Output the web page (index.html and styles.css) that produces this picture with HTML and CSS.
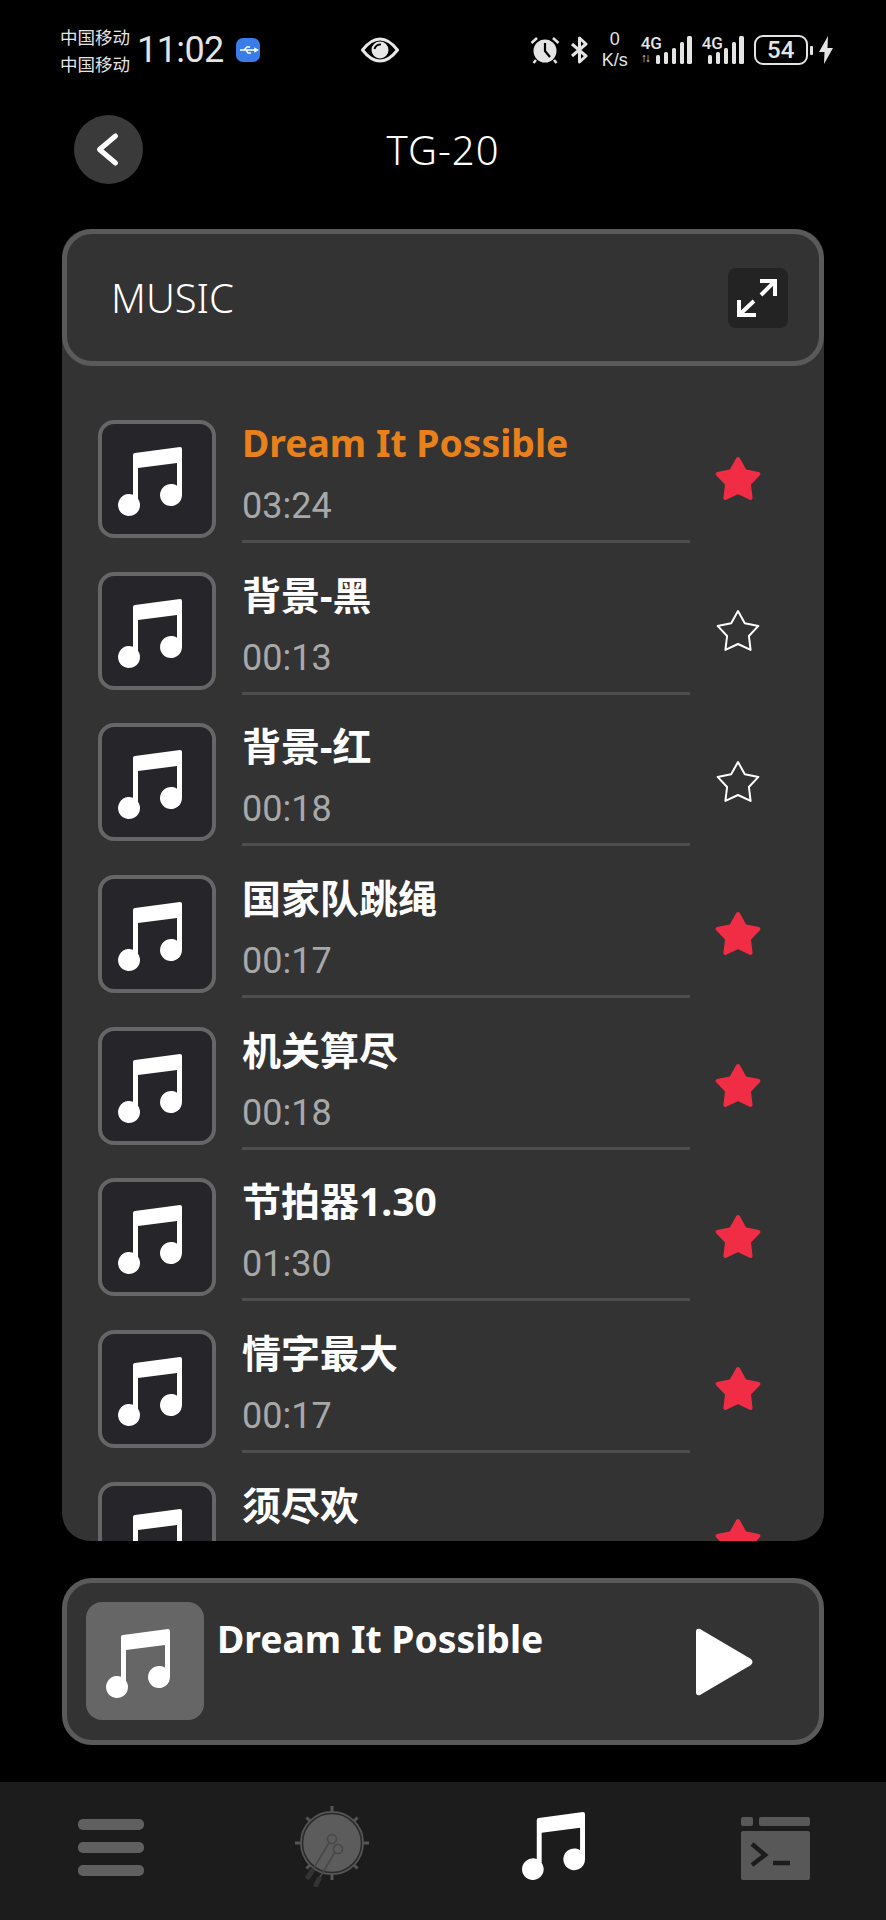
FILE: index.html
```html
<!DOCTYPE html>
<html lang="zh-CN">
<head>
  <meta charset="UTF-8" />
  <meta name="viewport" content="width=device-width, initial-scale=1.0"/>
  <title>TG-20</title>
  <link rel="stylesheet" href="styles.css">
</head>
<body>
  <svg class="defs" width="0" height="0">
    <symbol id="note" viewBox="0 0 118 118">
      <path d="M35 35 Q35 33 37 33 L82 27 Q84 27 84 29 V75 A11 11 0 1 1 79 65.8 V43 L40 48 V78.7 A11 11 0 1 1 35 74.8 Z"/>
    </symbol>
    <symbol id="star" viewBox="0 0 48 48">
      <path d="M24 4 L30.8 16.2 L44.4 18.9 L34.9 29 L36.6 42.9 L24 37 L11.4 42.9 L13.1 29 L3.6 18.9 L17.2 16.2 Z"/>
    </symbol>
  </svg>

  <header class="status">
    <div class="carrier"><span>中国移动</span><span>中国移动</span></div>
    <span class="clock">11:02</span>
    <span class="usb">
      <svg viewBox="0 0 24 24" width="24" height="24" fill="none" stroke="#fff" stroke-width="1.4"><path d="M4 12 H19 M8 12 L11 9 H14 M10 12 L12 15 H15"/><path d="M19 10.5 L21.5 12 L19 13.5 Z" fill="#fff"/></svg>
    </span>
    <svg class="eye" viewBox="0 0 38 26" width="38" height="26">
      <path d="M1.5 13 Q10 2 19 2 Q28 2 36.5 13 Q28 24 19 24 Q10 24 1.5 13 Z" fill="none" stroke="#e8e8e8" stroke-width="3"/>
      <circle cx="19" cy="13" r="8.5" fill="#e8e8e8"/>
      <path d="M13.5 12 A6 6 0 0 1 20 7.5 A6 6 0 0 0 13.5 12 Z" fill="#000" stroke="#000" stroke-width="2"/>
    </svg>
    <div class="status-right">
      <svg class="alarm" viewBox="0 0 30 28" width="30" height="28">
        <circle cx="15" cy="15" r="11.5" fill="#e4e4e4"/>
        <path d="M15 7 V15 L20 21" fill="none" stroke="#000" stroke-width="2.2"/>
        <path d="M1.5 7 L7 2 M28.5 7 L23 2 M6 24 L3.5 27 M24 24 L26.5 27" stroke="#e4e4e4" stroke-width="2.6" fill="none"/>
      </svg>
      <svg class="bt" viewBox="0 0 19 28" width="19" height="28" fill="none" stroke="#e4e4e4" stroke-width="3" stroke-linejoin="round">
        <path d="M2 8 L16 20 L9.5 26 V2 L16 8 L2 20"/>
      </svg>
      <div class="speed"><span class="speed-num">0</span><span class="speed-unit">K/s</span></div>
      <div class="sig sig-first">
        <div class="sig-label"><span>4G</span><span class="sig-arrows">↑↓</span></div>
        <svg viewBox="0 0 36 28" width="36" height="28" fill="#e4e4e4">
          <rect x="0" y="19" width="4" height="9" rx="1.5"/><rect x="8" y="16" width="4" height="12" rx="1.5"/><rect x="16" y="12" width="4" height="16" rx="1.5"/><rect x="24" y="6" width="4" height="22" rx="1.5"/><rect x="31" y="0" width="5" height="28" rx="1.5"/>
        </svg>
      </div>
      <div class="sig">
        <div class="sig-label"><span>4G</span></div>
        <svg viewBox="0 0 36 28" width="36" height="28" fill="#e4e4e4">
          <rect x="0" y="19" width="4" height="9" rx="1.5"/><rect x="8" y="16" width="4" height="12" rx="1.5"/><rect x="16" y="12" width="4" height="16" rx="1.5"/><rect x="24" y="6" width="4" height="22" rx="1.5"/><rect x="31" y="0" width="5" height="28" rx="1.5"/>
        </svg>
      </div>
      <div class="battery"><span>54</span></div>
      <span class="battery-tip"></span>
      <svg class="bolt" viewBox="0 0 14 28" width="14" height="28"><path d="M9 0 L0 16 H5.5 L5 28 L14 12 H8.5 Z" fill="#e4e4e4"/></svg>
    </div>
  </header>

  <div class="topbar">
    <button class="back">
      <svg viewBox="0 0 69 69" width="69" height="69" fill="none" stroke="#fff" stroke-width="5" stroke-linecap="round" stroke-linejoin="round"><path d="M41.5 21 L25.5 34.5 L41.5 48"/></svg>
    </button>
    <h1>TG-20</h1>
  </div>

  <main class="content">
    <section class="music-card">
      <div class="music-head">
        <h2>MUSIC</h2>
        <button class="expand">
          <svg viewBox="0 0 60 60" width="60" height="60" fill="none" stroke="#fff" stroke-width="4"><path d="M32 13 H47 V28 M47 13 L33 27 M11 32 V47 H28 M11 47 L26 33"/></svg>
        </button>
      </div>
      <ul class="song-list">
        <li class="song">
          <div class="song-thumb"><svg class="note"><use href="#note"/></svg></div>
          <div class="song-body"><div class="song-name playing">Dream It Possible</div><div class="song-time">03:24</div></div>
          <svg class="star on"><use href="#star"/></svg>
        </li>
        <li class="song">
          <div class="song-thumb"><svg class="note"><use href="#note"/></svg></div>
          <div class="song-body"><div class="song-name">背景-黑</div><div class="song-time">00:13</div></div>
          <svg class="star"><use href="#star"/></svg>
        </li>
        <li class="song">
          <div class="song-thumb"><svg class="note"><use href="#note"/></svg></div>
          <div class="song-body"><div class="song-name">背景-红</div><div class="song-time">00:18</div></div>
          <svg class="star"><use href="#star"/></svg>
        </li>
        <li class="song">
          <div class="song-thumb"><svg class="note"><use href="#note"/></svg></div>
          <div class="song-body"><div class="song-name">国家队跳绳</div><div class="song-time">00:17</div></div>
          <svg class="star on"><use href="#star"/></svg>
        </li>
        <li class="song">
          <div class="song-thumb"><svg class="note"><use href="#note"/></svg></div>
          <div class="song-body"><div class="song-name">机关算尽</div><div class="song-time">00:18</div></div>
          <svg class="star on"><use href="#star"/></svg>
        </li>
        <li class="song">
          <div class="song-thumb"><svg class="note"><use href="#note"/></svg></div>
          <div class="song-body"><div class="song-name">节拍器1.30</div><div class="song-time">01:30</div></div>
          <svg class="star on"><use href="#star"/></svg>
        </li>
        <li class="song">
          <div class="song-thumb"><svg class="note"><use href="#note"/></svg></div>
          <div class="song-body"><div class="song-name">情字最大</div><div class="song-time">00:17</div></div>
          <svg class="star on"><use href="#star"/></svg>
        </li>
        <li class="song">
          <div class="song-thumb"><svg class="note"><use href="#note"/></svg></div>
          <div class="song-body"><div class="song-name">须尽欢</div></div>
          <svg class="star on"><use href="#star"/></svg>
        </li>
      </ul>
    </section>

    <section class="player">
      <div class="player-thumb"><svg class="note"><use href="#note"/></svg></div>
      <div class="player-name">Dream It Possible</div>
      <svg class="play" viewBox="0 0 60 70" width="60" height="70"><path d="M5 2 L56 32 Q59 35 56 38 L5 68 Q1 69 1 65 V5 Q1 1 5 2 Z" fill="#fff"/></svg>
    </section>
  </main>

  <nav class="tabs">
    <div class="tab">
      <div class="menu-icon"><span></span><span></span><span></span></div>
    </div>
    <div class="tab">
      <svg class="drum" viewBox="0 0 80 84" width="80" height="84">
        <g stroke="#555" stroke-width="3">
          <path d="M40 3 V10 M40 70 V77 M3 40 H10 M70 40 H77 M14.5 14.5 L19 19 M65.5 14.5 L61 19 M14.5 65.5 L19 61 M65.5 65.5 L61 61"/>
        </g>
        <circle cx="40" cy="40" r="31" fill="#5c5c5c" stroke="#555" stroke-width="2"/>
        <circle cx="40" cy="40" r="29.5" fill="none" stroke="#2b2b2b" stroke-width="1.5"/>
        <g fill="none" stroke="#484848" stroke-width="1.6">
          <circle cx="40" cy="36" r="4.5"/>
          <circle cx="46" cy="46" r="4.5"/>
          <path d="M37 40 L20 68 M43 49 L27 76"/>
        </g>
        <path d="M20 68 L16 74 M27 76 L24 82" stroke="#333" stroke-width="5" stroke-linecap="round"/>
      </svg>
    </div>
    <div class="tab">
      <svg class="tab-note" viewBox="20 27 64 69"><use href="#note" width="118" height="118"/></svg>
    </div>
    <div class="tab">
      <svg class="term" viewBox="0 0 69 63" width="69" height="63">
        <g fill="#585858">
          <rect x="0" y="0" width="12" height="9" rx="2"/>
          <rect x="18" y="0" width="51" height="9" rx="2"/>
          <rect x="0" y="14" width="69" height="49" rx="2"/>
        </g>
        <path d="M11 27 L24 38 L11 48" fill="none" stroke="#1c1c1c" stroke-width="4.5"/>
        <path d="M32 46 H49" stroke="#1c1c1c" stroke-width="4.5"/>
      </svg>
    </div>
  </nav>
</body>
</html>
```

FILE: styles.css
```css
:root {
  --card: #333333;
  --line: #5a5a5a;
  --status: #e4e4e4;
  --tabbar: #1c1c1c;
  --orange: #e8811c;
  --red: #f02d45;
}

* {
  box-sizing: border-box;
  margin: 0;
  padding: 0;
}

html, body {
  background-color: #000;
}

body {
  width: 886px;
  height: 1920px;
  overflow: hidden;
  display: flex;
  flex-direction: column;
  color: #fff;
  font-family: "Noto Sans", "Noto Sans CJK SC", sans-serif;
}

.defs {
  position: absolute;
}

button {
  border: none;
  display: block;
}

/* status bar */
.status {
  height: 100px;
  flex: none;
  display: flex;
  align-items: center;
  padding-left: 60px;
  color: var(--status);
}

.carrier {
  display: flex;
  flex-direction: column;
  font-size: 17.5px;
  line-height: 27px;
  font-family: "Noto Sans CJK SC", sans-serif;
}

.clock {
  margin-left: 7px;
  font-family: Roboto, sans-serif;
  font-size: 36px;
  letter-spacing: -0.6px;
}

.usb {
  width: 24px;
  height: 24px;
  margin-left: 12px;
  background-color: #3b7de8;
  border-radius: 7px;
}

.usb svg {
  display: block;
}

.eye {
  margin-left: 101px;
}

.status-right {
  display: flex;
  align-items: center;
  margin-left: 131px;
}

.bt {
  margin-left: 10px;
}

.speed {
  display: flex;
  flex-direction: column;
  align-items: center;
  width: 28px;
  margin-left: 12px;
  font-family: "Liberation Sans", sans-serif;
  line-height: 21px;
}

.speed-num {
  font-size: 18px;
}

.speed-unit {
  font-size: 18px;
}

.sig {
  display: flex;
  align-items: flex-end;
  margin-left: 10px;
}

.sig-first {
  margin-left: 12px;
}

.sig-label {
  display: flex;
  flex-direction: column;
  width: 6px;
  height: 28px;
  font-family: Roboto, sans-serif;
  font-size: 17px;
  font-weight: 500;
  line-height: 15px;
  white-space: nowrap;
}

.sig-first .sig-label {
  width: 15px;
}

.sig-arrows {
  font-family: "Liberation Sans", sans-serif;
  font-size: 12px;
  font-weight: 700;
  line-height: 15px;
  letter-spacing: -2px;
}

.battery {
  display: flex;
  align-items: center;
  justify-content: center;
  width: 54px;
  height: 30px;
  margin-left: 10px;
  border: 2px solid var(--status);
  border-radius: 9px;
  font-family: Roboto, sans-serif;
  font-size: 24px;
  font-weight: 500;
}

.battery-tip {
  width: 3px;
  height: 9px;
  margin-left: 2px;
  background-color: var(--status);
  border-radius: 1px;
}

.bolt {
  margin-left: 6px;
}

/* title row */
.topbar {
  flex: none;
  display: grid;
  grid-template-columns: 1fr auto 1fr;
  align-items: center;
  margin-top: 15px;
  padding: 0 74px;
}

.back {
  width: 69px;
  height: 69px;
  background-color: #3a3a3a;
  border-radius: 50%;
}

.topbar h1 {
  grid-column: 2;
  font-size: 40px;
  font-weight: 300;
  line-height: 69px;
  letter-spacing: 1px;
}

.content {
  flex: none;
  display: flex;
  flex-direction: column;
  gap: 37px;
  margin-top: 45px;
  padding: 0 62px;
}

/* song list card */
.music-card {
  height: 1312px;
  background-color: var(--card);
  border-radius: 28px;
  overflow: hidden;
}

.music-head {
  display: flex;
  align-items: center;
  justify-content: space-between;
  height: 137px;
  padding: 0 31px 0 44px;
  border: 5px solid var(--line);
  border-radius: 30px;
}

.music-head h2 {
  font-size: 40px;
  font-weight: 350;
}

.expand {
  width: 60px;
  height: 60px;
  background-color: #232323;
  border-radius: 8px;
}

.song-list {
  list-style: none;
  padding: 54px 0 0 36px;
}

.song {
  display: flex;
  height: 151.7px;
}

.song-thumb {
  flex: none;
  width: 118px;
  height: 118px;
  background-color: #26262a;
  border: 4px solid #666;
  border-radius: 16px;
}

.note {
  display: block;
  width: 118px;
  height: 118px;
  fill: #fff;
}

.song-thumb .note {
  margin: -4px;
}

.song-body {
  flex: none;
  width: 448px;
  height: 123px;
  margin-left: 26px;
  border-bottom: 3px solid #4d4d4d;
}

.song-name {
  font-size: 39px;
  font-weight: 700;
  line-height: 46px;
}

.song-name.playing {
  font-size: 37.3px;
  color: var(--orange);
}

.song-time {
  margin-top: 19px;
  font-family: Roboto, sans-serif;
  font-size: 36px;
  font-weight: 400;
  line-height: 42px;
  color: #a8a8a8;
}

.star {
  flex: none;
  width: 48px;
  height: 48px;
  margin: 35px 0 0 24px;
  fill: none;
  stroke: #fff;
  stroke-width: 2;
  stroke-linejoin: round;
}

.star.on {
  fill: var(--red);
  stroke: var(--red);
  stroke-width: 4;
}

/* now playing */
.player {
  display: flex;
  height: 167px;
  padding: 19px 0 0 19px;
  background-color: var(--card);
  border: 5px solid var(--line);
  border-radius: 30px;
}

.player-thumb {
  flex: none;
  width: 118px;
  height: 118px;
  background-color: #666;
  border-radius: 16px;
}

.player-name {
  margin: 14px 0 0 13px;
  font-size: 37.3px;
  font-weight: 700;
  line-height: 46px;
}

.play {
  margin: 25px 64px 0 auto;
}

/* bottom tabs */
.tabs {
  flex: none;
  display: flex;
  height: 138px;
  margin-top: 37px;
  background-color: var(--tabbar);
}

.tab {
  flex: 1;
  display: flex;
  align-items: center;
  justify-content: center;
}

.menu-icon {
  display: flex;
  flex-direction: column;
  gap: 12px;
  width: 66px;
  margin-bottom: 8px;
}

.menu-icon span {
  height: 11px;
  background-color: #606060;
  border-radius: 5px;
}

.drum {
  margin-bottom: 12px;
}

.tab-note {
  width: 63px;
  height: 68px;
  margin-bottom: 10px;
  fill: #fff;
}

.term {
  margin-bottom: 5px;
}
```
